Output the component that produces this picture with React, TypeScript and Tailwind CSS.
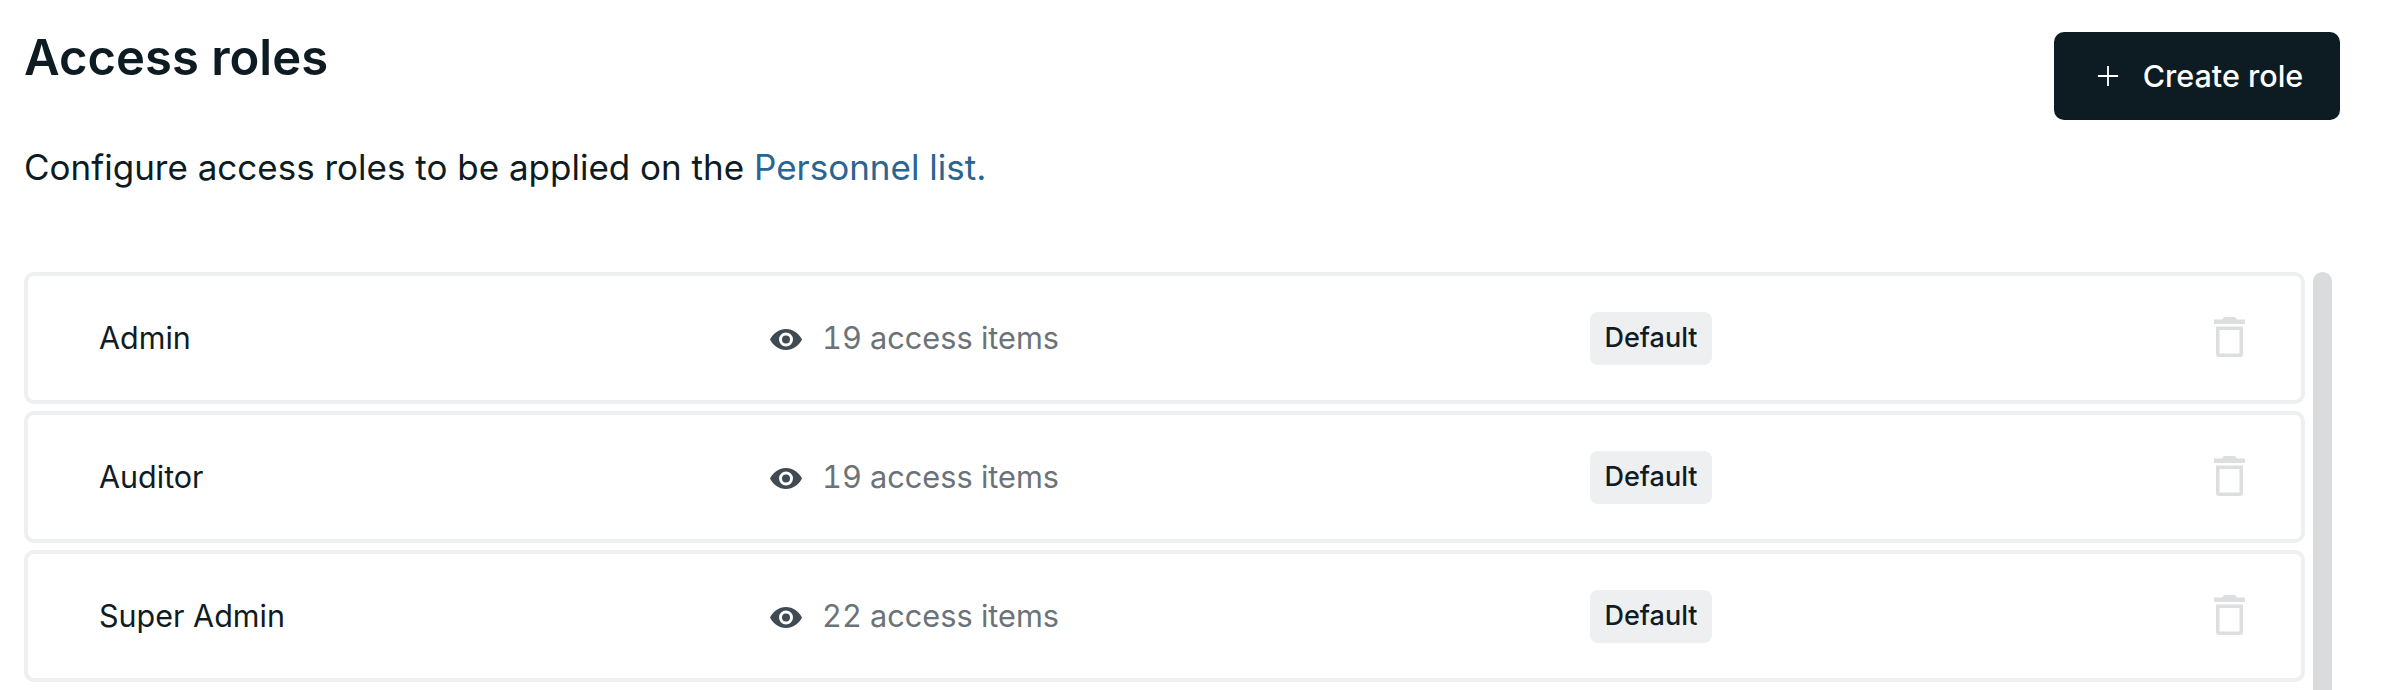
const roles = [
  { name: "Admin", items: 19 },
  { name: "Auditor", items: 19 },
  { name: "Super Admin", items: 22 },
];

function EyeIcon() {
  return (
    <svg viewBox="0 0 32 21" className="mt-[3px] w-[32px] h-[21px]" fill="#3f4a52">
      <path
        fillRule="evenodd"
        d="M16 0C9 0 3.2 4.3 0 10.5 3.2 16.7 9 21 16 21s12.800-4.300 16-10.500C28.800 4.300 23 0 16 0zm0 17.500a7 7 0 1 1 0-14 7 7 0 0 1 0 14zm0-3a4 4 0 1 0 0-8 4 4 0 0 0 0 8z"
      />
    </svg>
  );
}

function TrashIcon() {
  return (
    <svg viewBox="0 0 31 40" className="-mt-[2px] w-[31px] h-[40px]" fill="#dcdee0">
      <path d="M0 2.500h8l2-2.500h11l2 2.500h8v4.500H0z" />
      <path
        fillRule="evenodd"
        d="M2 9.500h27v27.500a3 3 0 0 1-3 3H5a3 3 0 0 1-3-3zm3.500 3.500V36.500h20V13z"
      />
    </svg>
  );
}

function RoleRow({ name, items }: { name: string; items: number }) {
  return (
    <div className="grid h-[132px] shrink-0 grid-cols-[671px_820px_1fr_87px] items-center rounded-[10px] border-4 border-[#eeeff1] pl-[71px]">
      <span className="text-[30.5px] leading-[40px] text-[#0f1c24]">{name}</span>
      <span className="flex items-center gap-[20px]">
        <EyeIcon />
        <span className="text-[30.7px] leading-[40px] tabular-nums text-[#6b7378]">{items} access items</span>
      </span>
      <span>
        <span className="inline-flex h-[53px] w-[122px] items-center justify-center rounded-[8px] bg-[#eeeff1] text-[27px] font-medium text-[#0f1c24]">
          Default
        </span>
      </span>
      <span className="flex">
        <TrashIcon />
      </span>
    </div>
  );
}

export default function App() {
  return (
    <main className="flex h-[690px] flex-col overflow-hidden bg-white pt-[32px] pl-[24px] pr-[46px] font-['Inter',sans-serif] text-[#0d1b22]">
      <div className="flex items-start justify-between">
        <h1 className="-mt-[3px] text-[49px] leading-[58px] font-semibold">Access roles</h1>
        <button className="flex h-[88px] w-[286px] items-center justify-center gap-[24px] rounded-[10px] bg-[#0d1b22] pl-[6px] text-[30.5px] font-medium text-white">
          <svg viewBox="0 0 24 24" className="h-[22px] w-[22px]" fill="none" stroke="white" strokeWidth="2">
            <path d="M12 1v22M1 12h22" />
          </svg>
          Create role
        </button>
      </div>
      <p className="mt-[25px] text-[35px] leading-[44px]">
        Configure access roles to be applied on the <a className="text-[#2a6592]">Personnel list.</a>
      </p>
      <div className="mt-[83px] -mr-[38px] flex flex-1 gap-[8px] pr-[46px]">
        <div className="flex flex-1 flex-col gap-[7px]">
          {roles.map((r) => (
            <RoleRow key={r.name} name={r.name} items={r.items} />
          ))}
        </div>
        <div className="w-[19px] rounded-t-full bg-[#dadbdd]" />
      </div>
    </main>
  );
}
